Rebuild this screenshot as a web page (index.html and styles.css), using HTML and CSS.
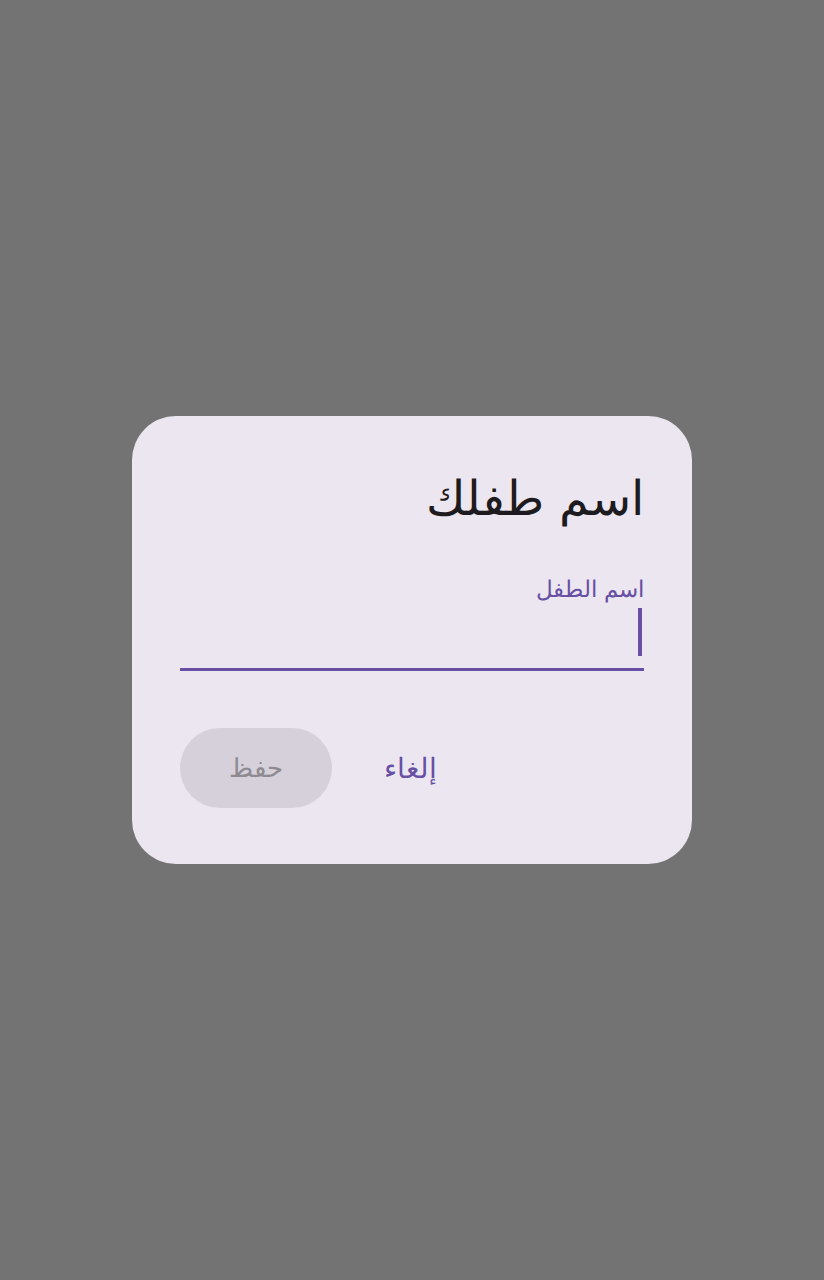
FILE: index.html
```html
<!DOCTYPE html>
<html lang="ar" dir="rtl">
<head>
<meta charset="utf-8">
<link rel="stylesheet" href="styles.css">
</head>
<body>
<div class="scrim">
  <div class="dialog">
    <h1 class="title">اسم طفلك</h1>
    <div class="field">
      <label class="label">اسم الطفل</label>
      <div class="input"><span class="cursor"></span></div>
    </div>
    <div class="actions">
      <button class="btn filled" disabled>حفظ</button>
      <button class="btn text">إلغاء</button>
    </div>
  </div>
</div>
</body>
</html>
```

FILE: styles.css
```css
html, body {
  margin: 0;
  padding: 0;
  height: 100%;
}
body {
  background: #737373;
  font-family: "DejaVu Sans", sans-serif;
}
.scrim {
  height: 1280px;
  display: flex;
  justify-content: center;
  align-items: flex-start;
  padding-top: 416px;
  box-sizing: border-box;
}
.dialog {
  width: 560px;
  height: 448px;
  box-sizing: border-box;
  background: #ece6f0;
  border-radius: 44px;
  padding: 48px 48px 56px 48px;
  display: flex;
  flex-direction: column;
}
.title {
  margin: 0;
  font-weight: 200;
  font-size: 48px;
  line-height: 64px;
  height: 64px;
  color: #1d1b20;
  padding-top: 2px;
}
.field {
  margin-top: 45px;
  display: flex;
  flex-direction: column;
}
.label {
  font-size: 23px;
  line-height: 28px;
  color: #6750a4;
  font-weight: 200;
}
.input {
  height: 65px;
  border-bottom: 3px solid #6750a4;
  display: flex;
  align-items: flex-start;
}
.cursor {
  display: block;
  width: 4px;
  height: 48px;
  margin-right: 2px;
  margin-top: 5px;
  background: #6750a4;
}
.actions {
  margin-top: auto;
  display: flex;
  direction: ltr;
  align-items: center;
  justify-content: flex-start;
  gap: 24px;
}
.btn {
  font-family: "DejaVu Sans", sans-serif;
  font-size: 28px;
  font-weight: 200;
  border: none;
  height: 80px;
  border-radius: 40px;
  background: transparent;
  padding: 0 28px;
}
.text {
  color: #6750a4;
}
.filled {
  background: #d5d0d9;
  color: #8e8a91;
  width: 152px;
  font-size: 26px;
}
```
